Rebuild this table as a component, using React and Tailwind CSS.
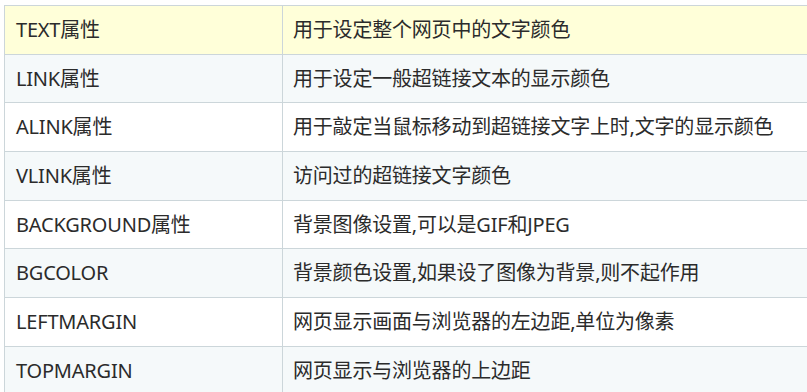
import React from 'react';

const rows = [
  ['TEXT属性', '用于设定整个网页中的文字颜色'],
  ['LINK属性', '用于设定一般超链接文本的显示颜色'],
  ['ALINK属性', '用于敲定当鼠标移动到超链接文字上时,文字的显示颜色'],
  ['VLINK属性', '访问过的超链接文字颜色'],
  ['BACKGROUND属性', '背景图像设置,可以是GIF和JPEG'],
  ['BGCOLOR', '背景颜色设置,如果设了图像为背景,则不起作用'],
  ['LEFTMARGIN', '网页显示画面与浏览器的左边距,单位为像素'],
  ['TOPMARGIN', '网页显示与浏览器的上边距'],
];

// row background: header is yellow, then light / white alternating
const rowBg = (i) => {
  if (i === 0) return 'bg-[#ffffd9]';
  return i % 2 === 1 ? 'bg-[#f5f9fa]' : 'bg-white';
};

export default function App() {
  return (
    <div className="w-[807px] h-[392px] overflow-hidden bg-white pt-[5px] pl-[4px]">
      <table
        className="w-[840px] border-collapse text-[20px] text-[#2b2b2b] leading-none tracking-[-0.2px]"
        style={{ fontFamily: '"Noto Sans", "Noto Sans CJK SC", sans-serif' }}
      >
        <tbody>
          {rows.map(([name, desc], i) => (
            <tr key={name} className={rowBg(i)}>
              <td className="w-[278px] h-[48.7px] border border-[#ccd6da] pl-[11px] align-middle whitespace-nowrap">
                {name}
              </td>
              <td className="h-[48.7px] border border-[#ccd6da] pl-[10px] align-middle whitespace-nowrap">
                {desc}
              </td>
            </tr>
          ))}
        </tbody>
      </table>
    </div>
  );
}
